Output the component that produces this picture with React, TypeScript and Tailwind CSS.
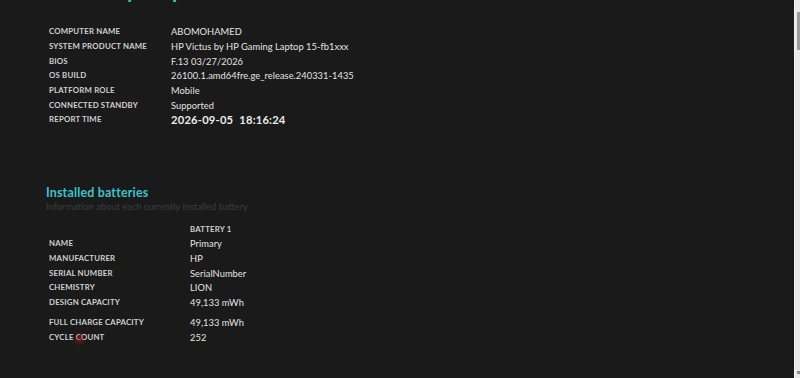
import React from 'react';

const systemRows: [string, string][] = [
    ['COMPUTER NAME', 'ABOMOHAMED'],
    ['SYSTEM PRODUCT NAME', 'HP Victus by HP Gaming Laptop 15-fb1xxx'],
    ['BIOS', 'F.13 03/27/2026'],
    ['OS BUILD', '26100.1.amd64fre.ge_release.240331-1435'],
    ['PLATFORM ROLE', 'Mobile'],
    ['CONNECTED STANDBY', 'Supported'],
];

const batteryRows: [string, string][] = [
    ['NAME', 'Primary'],
    ['MANUFACTURER', 'HP'],
    ['SERIAL NUMBER', 'SerialNumber'],
    ['CHEMISTRY', 'LION'],
    ['DESIGN CAPACITY', '49,133 mWh'],
];

const font = { fontFamily: 'Lato, "Open Sans", sans-serif' };

const Label: React.FC<{ children: React.ReactNode; w: string }> = ({ children, w }) => (
    <div className={`${w} shrink-0 text-[7.8px] font-bold tracking-[0.2px] text-[#d0d0d0]`}>
        {children}
    </div>
);

const Value: React.FC<{ children: React.ReactNode }> = ({ children }) => (
    <div className="text-[9.3px] tracking-[0.05px] text-[#e4e4e4]">{children}</div>
);

export default function App() {
    return (
        <div className="flex h-[378px] w-[800px] overflow-hidden bg-[#1a1a1a]" style={font}>
            {/* Page */}
            <div className="relative flex-1 pl-[46px]">
                <h1 className="-mt-[31px] h-[34px] text-[29px] font-normal leading-[34px] text-[#3ec3cc]">
                    Battery report
                </h1>

                {/* System info */}
                <div className="mt-[22px] flex flex-col pl-[3px]">
                    {systemRows.map(([label, value]) => (
                        <div key={label} className="flex h-[14.67px] items-center">
                            <Label w="w-[122px]">{label}</Label>
                            <Value>{value}</Value>
                        </div>
                    ))}
                    <div className="flex h-[14.67px] items-center">
                        <Label w="w-[122px]">REPORT TIME</Label>
                        <div className="mt-[1px] flex gap-[6px] text-[11.2px] font-bold tracking-[0.2px] text-[#ebebeb]">
                            <span>2026-09-05</span>
                            <span>18:16:24</span>
                        </div>
                    </div>
                </div>

                {/* Installed batteries */}
                <div className="mt-[57px]">
                    <h2 className="text-[12.4px] font-bold leading-[16px] tracking-[0.2px] text-[#3ec3cc]">
                        Installed batteries
                    </h2>
                    <p className="text-[9.3px] leading-[12px] text-[#3d3d3d]">
                        Information about each currently installed battery
                    </p>
                </div>

                <div className="mt-[10px] flex flex-col pl-[3px]">
                    <div className="flex h-[14px] items-center">
                        <div className="w-[141px]" />
                        <div className="text-[7.8px] font-bold tracking-[0.2px] text-[#d0d0d0]">BATTERY 1</div>
                    </div>
                    {batteryRows.map(([label, value]) => (
                        <div key={label} className="flex h-[14.75px] items-center">
                            <Label w="w-[141px]">{label}</Label>
                            <Value>{value}</Value>
                        </div>
                    ))}
                    <div className="mt-[5px] flex h-[14.75px] items-center">
                        <Label w="w-[141px]">FULL CHARGE CAPACITY</Label>
                        <Value>49,133 mWh</Value>
                    </div>
                    <div className="flex h-[14.75px] items-center">
                        <Label w="w-[141px]">CYCLE COUNT</Label>
                        <Value>252</Value>
                    </div>
                </div>

                {/* Red pointer smudge */}
                <svg className="absolute left-[72px] top-[331px] h-[17px] w-[16px] opacity-60 blur-[1.5px]" viewBox="0 0 16 17">
                    <path d="M8 1 L13 12 L9 10 L8 16 L6 10 L2 12 Z" fill="#a01818" />
                </svg>
            </div>

            {/* Scrollbar */}
            <div className="flex w-[6px] flex-col border-l border-[#f4f4f4] bg-[#e9e9e9]">
                <div className="mt-[12px] ml-[2px] h-[38px] w-[3px] bg-[#9c9c9c]" />
                <div className="flex-1" />
                <div className="mb-[4px] ml-[2px] h-[3px] w-[3px] bg-[#8a8a8a]" />
            </div>
        </div>
    );
}
